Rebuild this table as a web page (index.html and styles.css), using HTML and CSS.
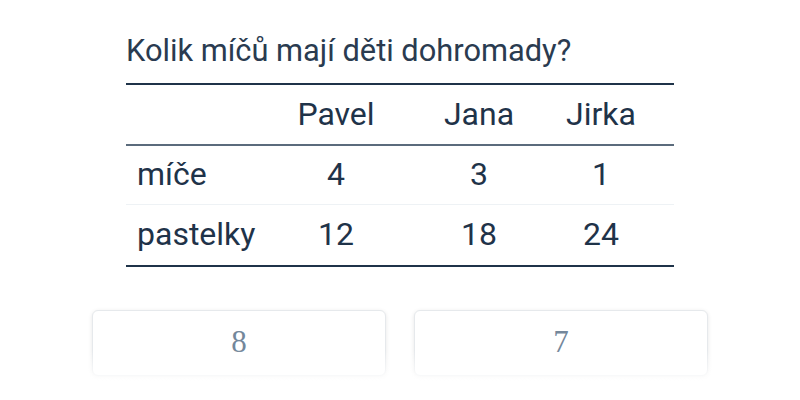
FILE: index.html
```html
<!DOCTYPE html>
<html lang="cs">
<head>
<meta charset="utf-8">
<link rel="stylesheet" href="styles.css">
</head>
<body>
<main class="page">
  <section class="task">
    <h1 class="title">Kolik míčů mají děti dohromady?</h1>
    <div class="table">
      <div class="row head">
        <span class="label"></span><span>Pavel</span><span>Jana</span><span>Jirka</span>
      </div>
      <div class="row body">
        <span class="label">míče</span><span>4</span><span>3</span><span>1</span>
      </div>
      <div class="row body last">
        <span class="label">pastelky</span><span>12</span><span>18</span><span>24</span>
      </div>
    </div>
  </section>
  <div class="answers">
    <button class="answer">8</button>
    <button class="answer">7</button>
  </div>
  <div class="fade"></div>
</main>
</body>
</html>
```

FILE: styles.css
```css
html, body {
  margin: 0;
  padding: 0;
  background: #ffffff;
}
.page {
  position: relative;
  width: 800px;
  height: 400px;
  overflow: hidden;
  font-family: Roboto, "Noto Sans", sans-serif;
  color: #1f3349;
}
.task {
  width: 548px;
  margin: 0 auto 0 126px;
  padding-top: 27px;
}
.title {
  margin: 0;
  font-size: 30.8px;
  font-weight: 400;
  line-height: 48px;
  color: #2a3b50;
  padding-bottom: 8px;
}
.table {
  border-top: 2px solid #1f3349;
  border-bottom: 2px solid #1f3349;
}
.row {
  display: grid;
  grid-template-columns: 136px 148px 138px 106px;
  padding-right: 20px;
  align-items: center;
  font-size: 32px;
  text-align: center;
  box-sizing: border-box;
}
.row.head {
  height: 61px;
  border-bottom: 2px solid #5b6b7c;
  padding-bottom: 2px;
}
.row.body {
  height: 59px;
  border-bottom: 1px solid #eef2f5;
  padding-bottom: 2px;
}
.row.body.last {
  height: 60px;
  border-bottom: none;
  padding-bottom: 2px;
}
.label {
  text-align: left;
  padding-left: 11px;
}
.answers {
  display: flex;
  justify-content: center;
  gap: 28px;
  margin-top: 43px;
}
.answer {
  width: 294px;
  height: 66px;
  background: #ffffff;
  border: 1px solid #e6e9ec;
  border-radius: 6px;
  box-shadow: 0 1px 4px rgba(0, 0, 0, 0.10);
  font-family: "Liberation Serif", serif;
  font-size: 31px;
  line-height: 1;
  color: #74879b;
  padding: 0 0 4px;
}
.fade {
  position: absolute;
  left: 0;
  right: 0;
  bottom: 0;
  height: 50px;
  background: linear-gradient(to bottom, rgba(255,255,255,0), #ffffff 70%);
}
```
